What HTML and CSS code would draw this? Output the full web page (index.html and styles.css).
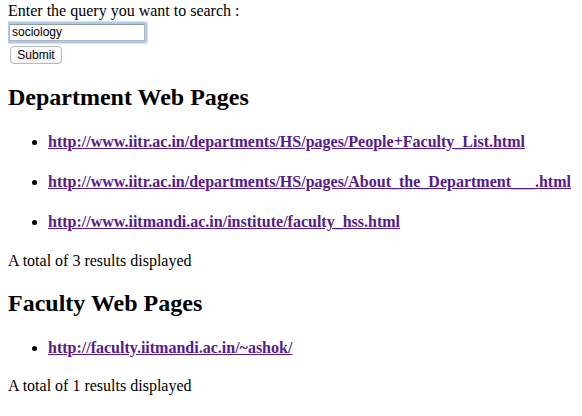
FILE: index.html
```html
<!DOCTYPE html>
<html>
<head>
<meta charset="utf-8">
<link rel="stylesheet" href="styles.css">
</head>
<body>
<form class="search">
<div class="label">Enter the query you want to search :</div>
<input class="query" type="text" value="sociology">
<div class="btnrow"><button class="submit" type="button">Submit</button></div>
</form>
<h2 class="section">Department Web Pages</h2>
<ul class="results">
<li><h4 class="item"><a href="#">http://www.iitr.ac.in/departments/HS/pages/People+Faculty_List.html</a></h4></li>
<li><h4 class="item"><a href="#">http://www.iitr.ac.in/departments/HS/pages/About_the_Department___.html</a></h4></li>
<li><h4 class="item"><a href="#">http://www.iitmandi.ac.in/institute/faculty_hss.html</a></h4></li>
</ul>
<p class="total">A total of 3 results displayed</p>
<h2 class="section">Faculty Web Pages</h2>
<ul class="results">
<li><h4 class="item"><a href="#">http://faculty.iitmandi.ac.in/~ashok/</a></h4></li>
</ul>
<p class="total">A total of 1 results displayed</p>
</body>
</html>
```
FILE: styles.css
```css
html, body {
  background: #fff;
}
body {
  margin: 0 8px 8px 8px;
  font-family: "Liberation Serif", "Times New Roman", serif;
  font-size: 16px;
  color: #000;
}
.search {
  margin: 0;
}
.label {
  line-height: 18px;
  padding-top: 2px;
}
.query {
  display: block;
  width: 130px;
  height: 15px;
  margin: 4px 0 0 1px;
  padding: 0 2px;
  border: 1px solid #b4b4b4;
  border-top-color: #9a9a9a;
  outline: none;
  box-shadow: 0 0 0 2px #a9cbf3, 0 0 1px 3px #cfe2f8;
  border-radius: 1px;
  font-family: "Liberation Sans", Arial, sans-serif;
  font-size: 12px;
  line-height: 15px;
  color: #000;
  caret-color: #000;
}
.btnrow {
  margin-top: 4px;
}
.submit {
  margin-left: 2px;
  height: 18px;
  width: 52px;
  padding: 0;
  border: 1px solid #b8b8b8;
  border-radius: 4px;
  background: linear-gradient(#ffffff, #f3f3f3);
  font-family: "Liberation Sans", Arial, sans-serif;
  font-size: 12px;
  line-height: 16px;
  color: #000;
}
.section {
  font-size: 24px;
  font-weight: bold;
  margin: 20px 0;
}
.results {
  margin: 0;
  padding-left: 40px;
}
.item {
  font-size: 16px;
  font-weight: bold;
  line-height: 19px;
  margin: 21px 0 20.5px;
}
.item a {
  color: #551a8b;
  text-decoration: underline;
}
.total {
  margin: 16px 0;
}
```
